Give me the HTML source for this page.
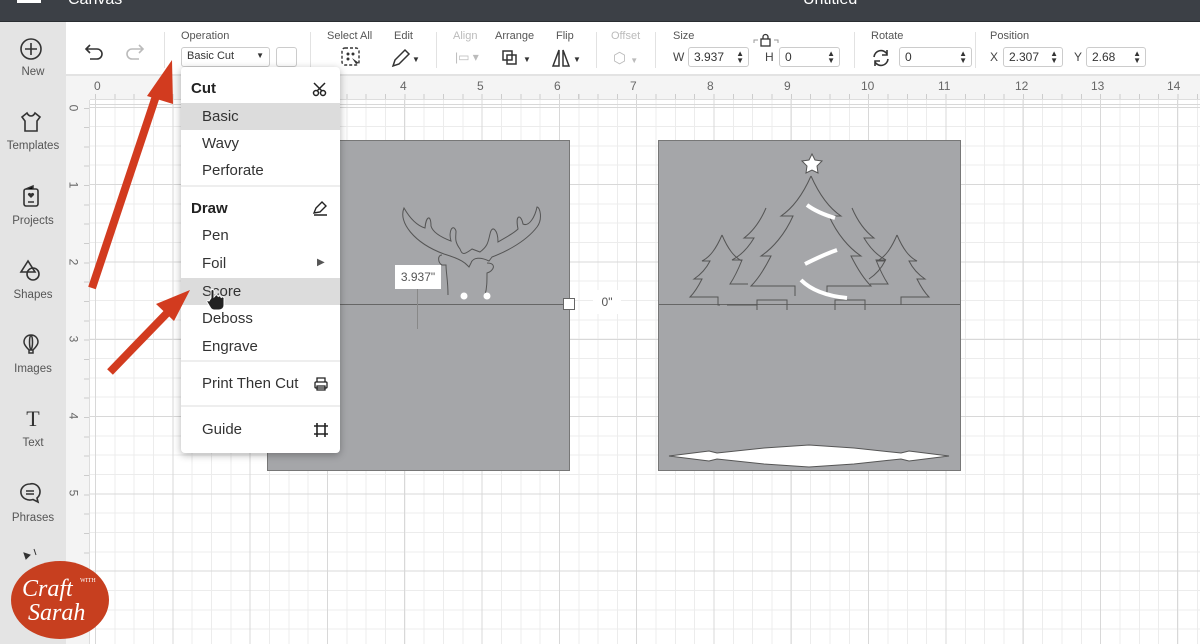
<!DOCTYPE html>
<html><head><meta charset="utf-8"><style>
*{margin:0;padding:0;box-sizing:border-box}
body{width:1200px;height:644px;overflow:hidden;position:relative;font-family:"Liberation Sans",sans-serif;background:#fff;color:#333}
.abs{position:absolute}
#top{left:0;top:0;width:1200px;height:22px;background:#3c4046;border-bottom:1px solid #2a2d31}
#tb{left:66px;top:22px;width:1134px;height:54px;background:#fff;border-bottom:2px solid #e3e3e3}
#side{left:0;top:22px;width:66px;height:622px;background:#e4e4e4}
.sl{position:absolute;left:0;width:66px;text-align:center;font-size:11.5px;color:#555}
#rt{left:66px;top:76px;width:1134px;height:24px;background:#f4f4f4;border-bottom:1px solid #ddd;
 background-image:repeating-linear-gradient(90deg,#ccc 0 1px,transparent 1px 19.33px);background-size:100% 6px;background-repeat:repeat-x;background-position:29px 18px}
#rl{left:66px;top:100px;width:24px;height:544px;background:#f4f4f4;border-right:1px solid #ddd;
 background-image:repeating-linear-gradient(0deg,transparent 0 18.33px,#ccc 18.33px 19.33px);background-size:6px 100%;background-repeat:no-repeat;background-position:18px 5px}
#grid{left:90px;top:100px;width:1110px;height:544px;background-color:#fff;
 background-image:repeating-linear-gradient(90deg,#d8d8d8 0 1px,transparent 1px 77.3px),repeating-linear-gradient(0deg,#d8d8d8 0 1px,transparent 1px 77.3px),repeating-linear-gradient(90deg,#ececec 0 1px,transparent 1px 19.33px),repeating-linear-gradient(0deg,#ececec 0 1px,transparent 1px 19.33px);
 background-position:5px 0,0 5px,5px 0,0 5px}
.rn{position:absolute;font-size:12px;color:#666}
.lab{position:absolute;font-size:11px;color:#555;top:30px}
.dis{color:#bbb}
.inp{position:absolute;border:1px solid #ccc;border-radius:3px;height:20px;top:47px;font-size:12px;padding:2px 5px;color:#333;background:#fff}
.inp b{position:absolute;right:4px;top:2px;font-size:8px;line-height:7px;font-weight:normal}
.sep{position:absolute;top:32px;width:1px;height:36px;background:#e2e2e2}
.card{position:absolute;background:#a5a6a9;border:1px solid #777}
#menu{left:181px;top:67px;width:159px;height:386px;background:#fff;border-radius:4px;box-shadow:0 2px 8px rgba(0,0,0,.3)}
.mi{position:absolute;left:0;width:159px;height:27px;font-size:15px;color:#333;padding-left:21px;line-height:27px}
.mh{font-weight:bold;padding-left:10px;color:#222}
.hl{background:#dcdcdc}
.dv{position:absolute;left:0;width:159px;height:2px;background:#eee}
</style></head><body>
<div id="top" class="abs">
 <div class="abs" style="left:17px;top:0;width:24px;height:3px;background:#fff"></div>
 <div class="abs" style="left:68px;top:-9px;color:#fff;font-size:16px">Canvas</div>
 <div class="abs" style="left:803px;top:-9px;color:#fff;font-size:16px">Untitled</div>
</div>
<div id="side" class="abs">
 <svg class="abs" style="left:19px;top:15px" width="24" height="24"><circle cx="12" cy="12" r="10" fill="none" stroke="#333" stroke-width="1.6"/><path d="M12 6v12M6 12h12" stroke="#333" stroke-width="1.6"/></svg>
 <div class="sl" style="top:44px">New</div>
 <svg class="abs" style="left:19px;top:88px" width="24" height="24"><path d="M8 3 3 7l3 4V21h12V11l3-4-5-4c-1 2-2 3-4 3S9 5 8 3z" fill="none" stroke="#333" stroke-width="1.6"/></svg>
 <div class="sl" style="top:118px">Templates</div>
 <svg class="abs" style="left:19px;top:162px" width="24" height="24"><rect x="5" y="5" width="14" height="17" rx="2" fill="none" stroke="#333" stroke-width="1.6"/><path d="M7 5 14 2v3M9 18h6" stroke="#333" stroke-width="1.5"/><path d="M12 14l-3-3a1.5 1.5 0 0 1 3-1 1.5 1.5 0 0 1 3 1z" fill="#333"/></svg>
 <div class="sl" style="top:193px">Projects</div>
 <svg class="abs" style="left:18px;top:236px" width="24" height="24"><path d="M10 3 3 14h14z" fill="none" stroke="#333" stroke-width="1.6"/><circle cx="15" cy="16" r="6" fill="none" stroke="#333" stroke-width="1.6"/></svg>
 <div class="sl" style="top:267px">Shapes</div>
 <svg class="abs" style="left:19px;top:310px" width="24" height="24"><path d="M12 3c-4 0-7 3-7 7 0 3 3 6 5 8h4c2-2 5-5 5-8 0-4-3-7-7-7zM10 18v3h4v-3M12 3c-2 2-2 12 0 15M12 3c2 2 2 12 0 15" fill="none" stroke="#333" stroke-width="1.5"/></svg>
 <div class="sl" style="top:341px">Images</div>
 <div class="abs" style="left:0;width:66px;text-align:center;top:384px;font-family:'Liberation Serif',serif;font-size:22px;color:#333">T</div>
 <div class="sl" style="top:415px">Text</div>
 <svg class="abs" style="left:18px;top:459px" width="24" height="24"><path d="M12 3a9 8 0 1 0 3 15.5L20 21l-1-4A8 8 0 0 0 12 3z" fill="none" stroke="#333" stroke-width="1.6"/><path d="M8 10h8M8 13h8" stroke="#333" stroke-width="1.5"/></svg>
 <div class="sl" style="top:490px">Phrases</div>
 <svg class="abs" style="left:20px;top:525px" width="24" height="24"><path d="M4 6l6 2-4 4zM14 2l2 6" stroke="#333" fill="#333"/></svg>
</div>
<div id="tb" class="abs">
 <svg class="abs" style="left:18px;top:20px" width="22" height="18"><path d="M6 3 2 7l4 4M2 7h11a5 5 0 0 1 0 10H6" fill="none" stroke="#333" stroke-width="1.6"/></svg>
 <svg class="abs" style="left:57px;top:20px" width="22" height="18"><path d="M16 3l4 4-4 4M20 7H9a5 5 0 0 0 0 10h7" fill="none" stroke="#bbb" stroke-width="1.6"/></svg>
 <div class="sep" style="left:98px;top:10px"></div>
</div>
<div class="lab" style="left:181px">Operation</div>
<div class="inp" style="left:181px;width:89px;font-size:11px">Basic Cut<span style="position:absolute;right:5px;top:3px;font-size:8px">▼</span></div>
<div class="inp" style="left:276px;width:21px"></div>
<div class="sep" style="left:310px"></div>
<div class="lab" style="left:327px">Select All</div>
<svg class="abs" style="left:340px;top:46px" width="22" height="22"><rect x="2" y="2" width="17" height="17" rx="3" fill="none" stroke="#333" stroke-width="1.4" stroke-dasharray="3 2"/><circle cx="8" cy="8" r="1.5" fill="#333"/><circle cx="13" cy="8" r="1.5" fill="#333"/><circle cx="8" cy="13" r="1.5" fill="#333"/><path d="M12 12l7 5-3 1z" fill="#333"/></svg>
<div class="lab" style="left:394px">Edit</div>
<svg class="abs" style="left:390px;top:47px" width="30" height="22"><path d="M3 19l2-6 10-10 4 4-10 10z" fill="none" stroke="#333" stroke-width="1.5"/><text x="22" y="15" font-size="8" fill="#333">▼</text></svg>
<div class="sep" style="left:436px"></div>
<div class="lab dis" style="left:453px">Align</div>
<div class="abs" style="left:455px;top:50px;font-size:12px;color:#bbb">|▭ ▾</div>
<div class="lab" style="left:495px">Arrange</div>
<svg class="abs" style="left:500px;top:48px" width="34" height="20"><rect x="3" y="3" width="9" height="9" fill="none" stroke="#333" stroke-width="1.5"/><rect x="7" y="7" width="9" height="9" fill="none" stroke="#333" stroke-width="1.5"/><text x="23" y="14" font-size="8" fill="#333">▼</text></svg>
<div class="lab" style="left:556px">Flip</div>
<svg class="abs" style="left:550px;top:47px" width="34" height="22"><path d="M9 3 3 19h6zM13 3l6 16h-6z" fill="none" stroke="#333" stroke-width="1.5"/><text x="23" y="15" font-size="8" fill="#333">▼</text></svg>
<div class="sep" style="left:596px"></div>
<div class="lab dis" style="left:611px">Offset</div>
<div class="abs" style="left:613px;top:49px;font-size:15px;color:#bbb">⬡ <span style="font-size:8px">▼</span></div>
<div class="sep" style="left:655px"></div>
<div class="lab" style="left:673px">Size</div>
<div class="abs" style="left:673px;top:50px;font-size:12px;color:#444">W</div>
<div class="inp" style="left:688px;width:61px">3.937<b>▲<br>▼</b></div>
<svg class="abs" style="left:752px;top:33px" width="28" height="14"><path d="M2 10V7h4M26 10V7h-4" stroke="#999" fill="none"/><rect x="9" y="6" width="9" height="7" fill="none" stroke="#333" stroke-width="1.3"/><path d="M11 6V4a2.5 2.5 0 0 1 5 0v2" stroke="#333" fill="none" stroke-width="1.3"/></svg>
<div class="abs" style="left:765px;top:50px;font-size:12px;color:#444">H</div>
<div class="inp" style="left:779px;width:61px">0<b>▲<br>▼</b></div>
<div class="sep" style="left:854px"></div>
<div class="lab" style="left:871px">Rotate</div>
<svg class="abs" style="left:871px;top:48px" width="20" height="20"><path d="M3 9a7 7 0 0 1 13-3M17 11a7 7 0 0 1-13 3" fill="none" stroke="#333" stroke-width="1.6"/><path d="M16 2v5h-5M4 18v-5h5" fill="none" stroke="#333" stroke-width="1.6"/></svg>
<div class="inp" style="left:899px;width:73px">0<b>▲<br>▼</b></div>
<div class="sep" style="left:975px"></div>
<div class="lab" style="left:990px">Position</div>
<div class="abs" style="left:990px;top:50px;font-size:12px;color:#444">X</div>
<div class="inp" style="left:1003px;width:60px">2.307<b>▲<br>▼</b></div>
<div class="abs" style="left:1074px;top:50px;font-size:12px;color:#444">Y</div>
<div class="inp" style="left:1086px;width:60px">2.68<b>▲<br>▼</b></div>

<div id="rt" class="abs"></div>
<div id="rl" class="abs"></div>
<div class="abs" style="left:66px;top:76px;width:24px;height:24px;background:#f4f4f4"></div>
<div class="rn" style="left:94px;top:79px">0</div><div class="rn" style="left:400px;top:79px">4</div><div class="rn" style="left:477px;top:79px">5</div><div class="rn" style="left:554px;top:79px">6</div><div class="rn" style="left:630px;top:79px">7</div><div class="rn" style="left:707px;top:79px">8</div><div class="rn" style="left:784px;top:79px">9</div><div class="rn" style="left:861px;top:79px">10</div><div class="rn" style="left:938px;top:79px">11</div><div class="rn" style="left:1015px;top:79px">12</div><div class="rn" style="left:1091px;top:79px">13</div><div class="rn" style="left:1167px;top:79px">14</div>
<div class="rn" style="left:70px;top:101px;transform:rotate(90deg)">0</div><div class="rn" style="left:70px;top:178px;transform:rotate(90deg)">1</div><div class="rn" style="left:70px;top:255px;transform:rotate(90deg)">2</div><div class="rn" style="left:70px;top:332px;transform:rotate(90deg)">3</div><div class="rn" style="left:70px;top:409px;transform:rotate(90deg)">4</div><div class="rn" style="left:70px;top:486px;transform:rotate(90deg)">5</div>
<div id="grid" class="abs"></div>

<div class="card" style="left:267px;top:140px;width:303px;height:331px"></div>
<div class="abs" style="left:268px;top:304px;width:301px;height:1px;background:#666"></div>
<svg class="abs" style="left:390px;top:200px" width="170" height="105"><path d="M14 8c-6 14 10 35 40 46 20 6 22 10 25 13l2-4c2-6 10-6 18-2l3-4c8-3 32-13 45-30 6-8 3-20 0-20-2 10-8 20-14 17-2-10-8-10-5 5-5 5-12 8-20 13 0-12-6-18-8-8-2 8-2 12-10 18l-8-3c-8 6-10 6-12 0-6-8-4-12-4-18-3-8-8 0-5 10-8-3-18-8-20-15 0-12-5-10-6 2C25 25 18 15 14 8zM52 55c-5 0-4 8 0 10h4c0 8 2 15 2 30M97 63c10 0 7 8 0 10 0 8 0 15-2 22" fill="none" stroke="#555" stroke-width="1"/><circle cx="74" cy="96" r="3.5" fill="#fff"/><circle cx="97" cy="96" r="3.5" fill="#fff"/></svg>
<div class="abs" style="left:395px;top:265px;width:46px;height:24px;background:#fff;font-size:12px;color:#555;text-align:center;line-height:24px">3.937"</div>
<div class="abs" style="left:417px;top:289px;width:1px;height:40px;background:#888"></div>
<div class="abs" style="left:563px;top:298px;width:12px;height:12px;background:#fff;border:1px solid #666"></div>
<div class="abs" style="left:593px;top:290px;width:28px;height:24px;background:#fff;font-size:12px;color:#555;text-align:center;line-height:24px">0"</div>

<div class="card" style="left:658px;top:140px;width:303px;height:331px"></div>
<div class="abs" style="left:659px;top:304px;width:301px;height:1px;background:#666"></div>
<svg class="abs" style="left:659px;top:140px" width="302" height="331" fill="none" stroke="#555" stroke-width="1">
<path d="M150 20l3-6 3 6 7 1-5 5 1 7-6-3-6 3 1-7-5-5z" fill="#fff"/>
<path d="M152 36c-8 18-18 32-30 40h12c-8 18-20 32-32 40h10c-6 12-12 22-20 30h44v10M152 36c8 18 18 32 30 40h-12c8 18 20 32 32 40h-10c6 12 12 22 20 30h-44v10"/>
<path d="M98 170V160h30v10M176 170v-10h30v10"/>
<path d="M107 68c-6 14-14 24-22 30h10c-6 10-14 18-22 22h10c-4 10-8 18-12 24h18M193 68c6 14 14 24 22 30h-10c6 10 14 18 22 22h-10c4 10 8 18 12 24h-18"/>
<path d="M63 95c-6 14-12 22-20 26h8c-4 8-10 14-16 18h8c-4 8-8 14-12 18h28v8h2M63 95c6 14 12 22 20 26M68 165h30M238 95c-6 14-12 22-20 26h8c-4 8-10 14-16 18M238 95c6 14 12 22 20 26h-8c4 8 10 14 16 18h-8c4 8 8 14 12 18h-28v8"/>
<path d="M148 65c8 6 18 10 28 13M146 124c10-5 20-10 32-14M142 140c10 10 26 16 46 18" stroke="#fff" stroke-width="4"/>
<polygon points="10,316 50,311 58,313 105,308 150,305 195,308 242,313 250,311 290,316 250,321 242,319 195,324 150,327 105,324 58,319 50,321" fill="#fff"/>
</svg>

<div id="menu" class="abs">
 <div class="mi mh" style="top:8px">Cut</div>
 <svg class="abs" style="left:131px;top:14px" width="16" height="16"><circle cx="4" cy="12" r="2.5" fill="none" stroke="#222" stroke-width="1.5"/><circle cx="11" cy="12" r="2.5" fill="none" stroke="#222" stroke-width="1.5"/><path d="M5 10 13 2M10 10 2 2" stroke="#222" stroke-width="1.5"/></svg>
 <div class="mi hl" style="top:36px">Basic</div>
 <div class="mi" style="top:63px">Wavy</div>
 <div class="mi" style="top:90px">Perforate</div>
 <div class="dv" style="top:118px"></div>
 <div class="mi mh" style="top:128px">Draw</div>
 <svg class="abs" style="left:131px;top:134px" width="16" height="16"><path d="M2 12 4 7l6-6 4 4-6 6zM2 14h13" fill="none" stroke="#222" stroke-width="1.4"/></svg>
 <div class="mi" style="top:155px">Pen</div>
 <div class="mi" style="top:183px">Foil</div>
 <div class="abs" style="left:136px;top:190px;font-size:10px;color:#555">▶</div>
 <div class="mi hl" style="top:211px">Score</div>
 <div class="mi" style="top:238px">Deboss</div>
 <div class="mi" style="top:266px">Engrave</div>
 <div class="dv" style="top:293px"></div>
 <div class="mi" style="top:303px">Print Then Cut</div>
 <svg class="abs" style="left:132px;top:309px" width="16" height="16"><rect x="2" y="6" width="12" height="6" rx="1" fill="none" stroke="#222" stroke-width="1.3"/><path d="M4 6V2h8v4M4 10h8v4H4z" fill="none" stroke="#222" stroke-width="1.3"/></svg>
 <div class="dv" style="top:338px"></div>
 <div class="mi" style="top:349px">Guide</div>
 <svg class="abs" style="left:132px;top:355px" width="16" height="16"><path d="M4 1v14M12 1v14M1 4h14M1 12h14" stroke="#222" stroke-width="1.6"/></svg>
</div>
<svg class="abs" style="left:206px;top:288px" width="20" height="24"><path d="M5 10V3a1.5 1.5 0 0 1 3 0v6l1-1a1.5 1.5 0 0 1 3 1 1.5 1.5 0 0 1 3 1 1.5 1.5 0 0 1 3 1v6c0 3-2 5-5 5H8c-2 0-3-1-4-3l-3-5c-.5-1 1-2 2-1z" fill="#222" stroke="#fff" stroke-width="1"/></svg>

<svg class="abs" style="left:0;top:0" width="1200" height="644">
<path d="M92 288 158 90" stroke="#d23b1f" stroke-width="8"/><path d="M172 60 147 96l26 8z" fill="#d23b1f"/>
<path d="M110 372 170 310" stroke="#d23b1f" stroke-width="8"/><path d="M190 290l-34 14 18 17z" fill="#d23b1f"/>
<ellipse cx="60" cy="600" rx="49" ry="39" fill="#c73f1f"/>
<text x="22" y="596" font-family="Liberation Serif,serif" font-style="italic" font-size="24" fill="#fff">Craft</text>
<text x="80" y="582" font-family="Liberation Serif,serif" font-size="6" fill="#fff">WITH</text>
<text x="28" y="620" font-family="Liberation Serif,serif" font-style="italic" font-size="24" fill="#fff">Sarah</text>
</svg>
</body></html>
